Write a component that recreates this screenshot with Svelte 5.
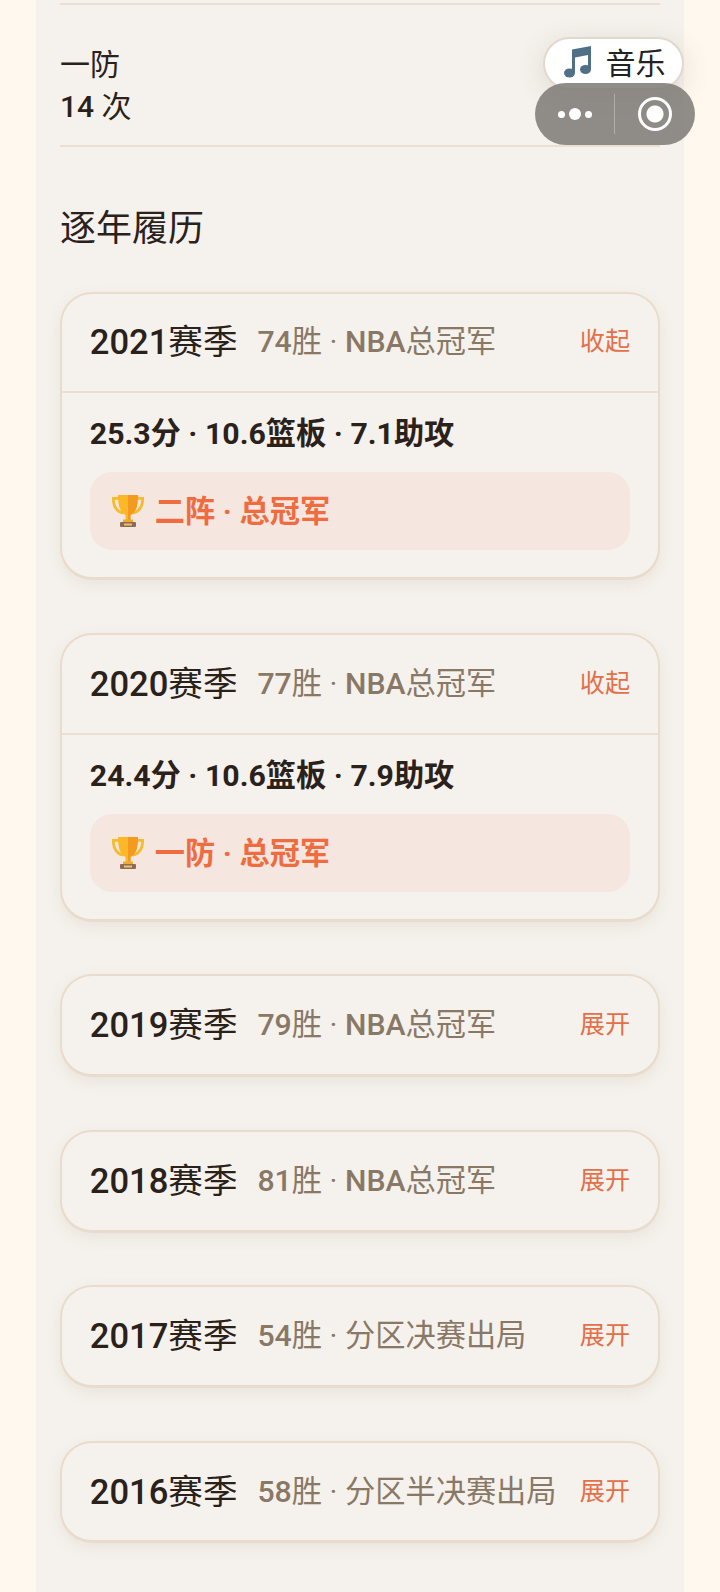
<script>
  let seasons = $state([
    { year: 2021, wins: 74, result: 'NBA总冠军', open: true, pts: '25.3', reb: '10.6', ast: '7.1', team: '二阵' },
    { year: 2020, wins: 77, result: 'NBA总冠军', open: true, pts: '24.4', reb: '10.6', ast: '7.9', team: '一防' },
    { year: 2019, wins: 79, result: 'NBA总冠军', open: false },
    { year: 2018, wins: 81, result: 'NBA总冠军', open: false },
    { year: 2017, wins: 54, result: '分区决赛出局', open: false },
    { year: 2016, wins: 58, result: '分区半决赛出局', open: false }
  ]);
</script>

<div class="page">
  <main class="panel">
    <div class="honor">
      <div>一防</div>
      <div><b>14</b> 次</div>
    </div>

    <h2>逐年履历</h2>

    {#each seasons as s}
      <section class="card">
        <button class="head" onclick={() => (s.open = !s.open)}>
          <span class="year"><b>{s.year}</b>赛季</span>
          <span class="sub"><b>{s.wins}</b>胜 · {#if s.result.startsWith('NBA')}<b>NBA</b>总冠军{:else}{s.result}{/if}</span>
          <span class="toggle">{s.open ? '收起' : '展开'}</span>
        </button>
        {#if s.open}
          <div class="body">
            <div class="stats">{s.pts}分 · {s.reb}篮板 · {s.ast}助攻</div>
            <div class="award">
              <svg class="trophy" viewBox="0 0 36 36" width="36" height="36">
                <path d="M9 4H2C1.500 13 5 20 13 21.500l.6-2.600C8 17.500 5 13 4.800 6.800H9zM27 4h7c.5 9-3 16-11 17.500l-.6-2.600c5.600-1.400 8.600-5.900 8.800-12.100H27z" fill="#f6bb2e"/>
                <path d="M8 2h20c0 9.500-1.500 17.500-7.500 20v5h-5v-5C9.500 19.500 8 11.500 8 2z" fill="#fcb828"/>
                <path d="M18 2h10c0 9.500-1.500 17.500-7.500 20v5H18z" fill="#f39a1f"/>
                <rect x="13" y="26.500" width="10" height="3" fill="#e9ac35"/>
                <rect x="10" y="29" width="16" height="5" rx="1" fill="#8f6a54"/>
                <rect x="14" y="30.500" width="8" height="2" fill="#e9c46a"/>
              </svg>
              <span>{s.team} · 总冠军</span>
            </div>
          </div>
        {/if}
      </section>
    {/each}
  </main>

  <div class="music">
    <svg viewBox="0 0 32 36" width="32" height="36">
      <path d="M10 6.500 29 3v23h-3V12L13 14.500V30h-3z" fill="#4f7087"/>
      <ellipse cx="7.500" cy="30" rx="5.500" ry="4.500" fill="#4f7087"/>
      <ellipse cx="23.500" cy="26.500" rx="5.500" ry="4.500" fill="#4f7087"/>
    </svg>
    <span>音乐</span>
  </div>

  <div class="capsule">
    <div class="dots"><i></i><i class="big"></i><i></i></div>
    <span class="sep"></span>
    <div class="target"><i></i></div>
  </div>
</div>

<style>
  :global(body) {
    margin: 0;
    background: #fff8ef;
  }

  .page {
    position: relative;
    height: 1592px;
    overflow: hidden;
    background: #fff8ef;
    font-family: Roboto, "Noto Sans CJK SC", sans-serif;
    color: #2a211b;
  }

  .panel {
    width: 648px;
    height: 1592px;
    margin: 0 auto;
    padding: 3px 24px 0;
    box-sizing: border-box;
    background: #f5f2ed;
  }

  b {
    font-weight: 500;
  }

  .honor {
    padding: 39px 0 17px;
    border-top: 2px solid #ebdfd2;
    border-bottom: 2px solid #ebdfd2;
    font-size: 30px;
    line-height: 42px;
  }

  h2 {
    margin: 58px 0 38.5px;
    font-size: 36px;
    line-height: 48px;
    font-weight: 400;
  }

  .card {
    margin-bottom: 52.76px;
    border: 2px solid #e9dccc;
    border-bottom-width: 3px;
    border-radius: 32px;
    background: #f5f2ed;
    box-shadow: 0 5px 16px rgba(120, 90, 60, 0.09);
  }

  .head {
    display: flex;
    align-items: center;
    width: 100%;
    height: 97.7px;
    padding: 0 27.8px 6px;
    box-sizing: border-box;
    border: none;
    background: none;
    font: inherit;
    color: inherit;
    text-align: left;
    cursor: pointer;
  }

  .year {
    font-size: 34.56px;
    flex: none;
  }

  .sub {
    margin-left: 20px;
    font-size: 30.24px;
    color: #8a7866;
    flex: 1;
    white-space: nowrap;
  }

  .toggle {
    margin-left: -1px;
    font-size: 25.2px;
    color: #e2704a;
    flex: none;
  }

  .body {
    padding: 0 27.8px 27px;
    border-top: 2px solid #eadfd1;
  }

  .stats {
    height: 79px;
    line-height: 81px;
    font-size: 30.24px;
    font-weight: 700;
    white-space: nowrap;
  }

  .award {
    display: flex;
    align-items: center;
    gap: 9px;
    height: 78px;
    padding: 0 20px 4px;
    box-sizing: border-box;
    border-radius: 22px;
    background: #f5e6df;
    color: #ee6c3f;
    font-size: 30.24px;
    font-weight: 700;
  }

  .trophy {
    margin-top: 4px;
  }

  .music {
    position: absolute;
    left: 543px;
    top: 37px;
    width: 141px;
    height: 53px;
    display: flex;
    align-items: center;
    justify-content: center;
    gap: 12px;
    box-sizing: border-box;
    padding-bottom: 5px;
    border: 2px solid #e3d8cc;
    border-radius: 27px;
    background: #fff;
    box-shadow: 0 6px 28px rgba(100, 80, 60, 0.16);
    font-size: 30px;
    color: #222;
  }

  .capsule {
    position: absolute;
    left: 535px;
    top: 83px;
    width: 160px;
    height: 62px;
    display: flex;
    align-items: center;
    border-radius: 31px;
    background: rgba(124, 121, 116, 0.85);
  }

  .dots {
    width: 79px;
    display: flex;
    align-items: center;
    justify-content: center;
    gap: 4px;
  }

  .dots i {
    width: 7px;
    height: 7px;
    border-radius: 50%;
    background: #fff;
  }

  .dots i.big {
    width: 12px;
    height: 12px;
  }

  .sep {
    width: 1px;
    height: 40px;
    background: rgba(255, 255, 255, 0.3);
  }

  .target {
    flex: 1;
    display: flex;
    justify-content: center;
  }

  .target i {
    display: flex;
    width: 34px;
    height: 34px;
    box-sizing: border-box;
    border: 3px solid #fff;
    border-radius: 50%;
    background: radial-gradient(circle, #fff 0 8px, transparent 9px);
  }
</style>
